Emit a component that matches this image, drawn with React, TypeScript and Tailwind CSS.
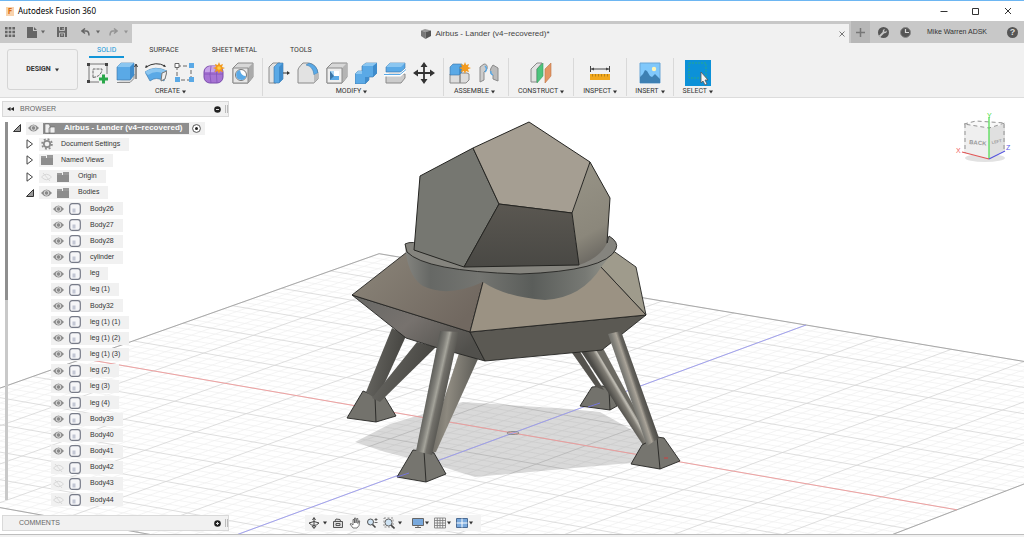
import React, { useState } from 'react';

type IconProps = { children: React.ReactNode; size?: string; box?: string };

const Svg: React.FC<IconProps> = ({ children, size = 'w-[22px] h-[22px]', box = '0 0 22 22' }) => (
  <svg viewBox={box} fill="none" className={`${size} shrink-0`} aria-hidden="true">
    {children}
  </svg>
);

const Caret: React.FC<{ className?: string }> = ({ className = 'text-[#333]' }) => (
  <svg viewBox="0 0 4 4" className={`w-1 h-1 shrink-0 ${className}`} aria-hidden="true">
    <path d="M0 0.5h4L2 3.5z" fill="currentColor" />
  </svg>
);

const GRAY = '#8a8a8a';
const BLUE = '#5aa9e6';
const EDGE = '#3a74a5';

const icons: Record<string, React.ReactNode> = {
  sketch: (
    <Svg>
      <path d="M2 2h18M2 2v18M2 20h10M20 2v10" stroke="#777" />
      <path d="M0 1h3v3H0zM18 1h3v3h-3zM0 18h3v3H0z" fill="#444" />
      <path d="M6 15.500V7H15C15 11 12 15 6 15.500z" stroke="#666" strokeDasharray="3 1" />
      <path d="M16.500 12.500v9M12 17h9" stroke="#2ba84a" strokeWidth="3" />
    </Svg>
  ),
  extrude: (
    <Svg>
      <path d="M1 20.500h13l4-4V12" stroke={GRAY} fill="#ddd" />
      <path d="M1 5l4-4h13v12l-4 5H1z" fill={BLUE} stroke={EDGE} strokeWidth=".6" />
      <path d="M1 5l4-4h13l-4 4z" fill="#8bc6f0" />
      <path d="M14 5l4-4v12l-4 5z" fill="#3f8ccc" />
      <path d="M20 17V3M18.500 5L20 2l1.500 3" stroke="#333" />
    </Svg>
  ),
  revolve: (
    <Svg>
      <path d="M1 5Q11-1 20 4" stroke="#333" />
      <path d="M0 6l1-3 2 2zM21 5l-3-.5 1.500-2z" fill="#333" />
      <path d="M0 10Q10 3 22 9l-3 10Q11 14 5 19z" fill={BLUE} stroke={EDGE} strokeWidth=".6" />
      <path d="M0 10Q10 3 22 9l-5 2Q10 8 3 13z" fill="#8bc6f0" />
      <path d="M17 11l5-2-2 8-4 2z" fill="#eee" stroke="#777" />
    </Svg>
  ),
  pattern: (
    <Svg>
      <path d="M3 4v14h14M3 4h14v14" stroke="#666" strokeDasharray="4 2" />
      <path d="M1 1.500h4v4H1z" fill="#fff" stroke="#666" />
      <path d="M15 1h5v5h-5zM1 15h5v5H1zM15 15h5v5h-5z" fill={BLUE} />
    </Svg>
  ),
  form: (
    <Svg>
      <rect x="1" y="4" width="19" height="17" rx="6" fill="#a774d4" stroke="#7a4cab" />
      <path d="M2 8Q4 4 9 4h5l-3 6H2z" fill="#c7a3e8" />
      <path d="M1 12h19M8 4q-2 9 0 17M14 5q-1 8 0 16" stroke="#8353b8" strokeWidth=".8" />
      <path d="M16 0l1.200 3L20 2l-1 3 3 1-3 1.200 1 3-3-1.200-1 3-1.200-3-3 1.200 1.200-3-3-1.200 3-1-1.200-3 3 1z" fill="#f29a1f" />
      <circle cx="16" cy="6" r="1.800" fill="#ffcf4a" />
    </Svg>
  ),
  hole: (
    <Svg>
      <path d="M1 6l5-5h15v14l-5 6H1z" fill="#d8d8d8" stroke={GRAY} />
      <path d="M16 6l5-5v14l-5 6z" fill="#aaa" />
      <path d="M1 6h15v15H1z" fill="#e6e6e6" stroke={GRAY} />
      <circle cx="9" cy="13" r="5.500" fill="#fff" stroke="#777" />
      <path d="M8 8a5 5 0 1 0 6 6q-5 0-6-6z" fill={BLUE} />
    </Svg>
  ),
  pressPull: (
    <Svg>
      <path d="M1 5l4-4h7v16l-4 4H1z" fill="#e2e2e2" stroke={GRAY} />
      <path d="M6 5l4-4h5v16l-4 4H6z" fill={BLUE} stroke={EDGE} strokeWidth=".6" />
      <path d="M11 5l4-4v16l-4 4z" fill="#3f8ccc" />
      <path d="M15 11h5" stroke="#333" />
      <path d="M22 11l-3-2v4z" fill="#333" />
    </Svg>
  ),
  fillet: (
    <Svg>
      <path d="M1 21V8q0-2 5-7h5q9 1 10 11v5l-4 4z" fill="#e2e2e2" stroke={GRAY} />
      <path d="M9 3q7 1 8 10l4-2Q20 3 12 1z" fill={BLUE} stroke={EDGE} strokeWidth=".5" />
      <path d="M17 13l4-2v6l-4 4z" fill="#bbb" />
    </Svg>
  ),
  shell: (
    <Svg>
      <path d="M1 6l5-5h15v14l-5 6H1z" fill="#d8d8d8" stroke={GRAY} />
      <path d="M16 6l5-5v14l-5 6z" fill="#b4b4b4" />
      <path d="M1 6h15v15H1z" fill="#eee" stroke={GRAY} />
      <path d="M4 9h9v9H4z" fill="#a8d5f5" />
      <path d="M4 9l4 5v4H4z" fill={EDGE} />
      <path d="M4 18l4-4h5v4z" fill={BLUE} />
      <path d="M8 9h5v5H8z" fill="#fff" />
    </Svg>
  ),
  combine: (
    <Svg>
      <path d="M0 12l3-3h4V4l4-3h11v10l-4 4h-4v3l-4 4H0z" fill={BLUE} stroke={EDGE} strokeWidth=".6" />
      <path d="M7 4l4-3h11l-4 3zM0 12l3-3h4v3z" fill="#8bc6f0" />
      <path d="M18 4l4-3v10l-4 4zM10 15h4v3l-4 4z" fill="#3f8ccc" />
    </Svg>
  ),
  split: (
    <Svg>
      <path d="M2 14l3-2h16v4l-4 5H2z" fill="#ccc" stroke={GRAY} />
      <path d="M2 5l4-4h15v5l-4 4H2z" fill={BLUE} stroke={EDGE} strokeWidth=".6" />
      <path d="M2 5l4-4h15l-4 4z" fill="#8bc6f0" />
      <path d="M0 13h16l6-5" stroke="#fff" strokeWidth="3" />
      <path d="M0 12.500h16l6-5" stroke={BLUE} />
    </Svg>
  ),
  move: (
    <Svg>
      <path d="M11 3v16M3 11h16" stroke="#333" strokeWidth="1.800" />
      <path d="M11 0l3.500 5h-7zM11 22l3.500-5h-7zM0 11l5-3.500v7zM22 11l-5-3.500v7z" fill="#333" />
    </Svg>
  ),
  component: (
    <Svg>
      <path d="M11 11h7l2 1v6l-3 3h-6zM1 12h10v9H1z" fill="#ddd" stroke={GRAY} />
      <path d="M1 5l3-3h9v8l-3 3H1z" fill={BLUE} stroke={EDGE} strokeWidth=".6" />
      <path d="M10 5l3-3v8l-3 3z" fill="#3f8ccc" />
      <path d="M16 0l1.200 3L20 2l-1 3 3 1-3 1.200 1 3-3-1.200-1 3-1.200-3-3 1.200 1.200-3-3-1.200 3-1-1.200-3 3 1z" fill="#f29a1f" />
    </Svg>
  ),
  joint: (
    <Svg>
      <path d="M2 5l4-3q4 0 3 5l-3 3v8l-4 2z" fill="#ccc" stroke={GRAY} />
      <path d="M20 19l-5-2v-4q-4-2-2-7l2-3 5 3z" fill="#bbb" stroke={GRAY} />
      <path d="M7 4q3 3 0 6M13 9q-1 3 2 4" stroke={BLUE} strokeWidth="1.500" />
    </Svg>
  ),
  plane: (
    <Svg>
      <path d="M1 7l6-6h5L7 7v13H1z" fill="#e2e2e2" stroke={GRAY} />
      <path d="M7 7l6-6v13l-6 7z" fill="#4dc47d" stroke="#3a9c60" strokeWidth=".6" />
      <path d="M15 7l6-6v13l-6 7z" fill="#e49563" stroke="#bd7547" strokeWidth=".6" />
    </Svg>
  ),
  measure: (
    <Svg>
      <path d="M1.500 4v6M20.500 4v6M2 7h18" stroke="#444" />
      <path d="M2 7l3-1.500v3zM20 7l-3-1.500v3z" fill="#444" />
      <path d="M1 12h20v6H1z" fill="#f2a81d" />
      <path d="M3.500 12v2.500M6.500 12v2.500M9.500 12v2.500M12.500 12v2.500M15.500 12v2.500M18.500 12v2.500" stroke="#a87814" strokeWidth=".8" />
    </Svg>
  ),
  image: (
    <Svg>
      <path d="M1 1h20v20H1z" fill="#80c8fb" stroke="#6aa6d6" />
      <circle cx="15" cy="7" r="2.200" fill="#fff5b5" />
      <path d="M1 15l3-3 2-4 2 1 3 5 2 1 3-3 5 5v4H1z" fill="#3d80b3" />
    </Svg>
  ),
  select: (
    <Svg size="w-[26px] h-[26px]" box="0 0 26 26">
      <path d="M0 0h26v26H0z" fill="#0c91d8" />
      <path d="M4 3h17v15H4z" stroke="#27a88c" strokeDasharray="2 1" />
      <path d="M16 12l7 8h-3l2 4-2 1-2-4-2 2z" fill="#f4f4f4" stroke="#555" strokeWidth=".8" />
    </Svg>
  ),
};

const groups = [
  { label: 'CREATE', tools: ['sketch', 'extrude', 'revolve', 'pattern', 'form', 'hole'], pad: 'pl-0 pr-2' },
  { label: 'MODIFY', tools: ['pressPull', 'fillet', 'shell', 'combine', 'split', 'move'], pad: 'pl-[5px] pr-2' },
  { label: 'ASSEMBLE', tools: ['component', 'joint'], pad: 'pl-[5px] pr-2' },
  { label: 'CONSTRUCT', tools: ['plane'], pad: 'px-[9px]' },
  { label: 'INSPECT', tools: ['measure'], pad: 'px-[9px]' },
  { label: 'INSERT', tools: ['image'], pad: 'px-2' },
  { label: 'SELECT', tools: ['select'], pad: 'px-[9px]' },
];

const bodies = [
  'Body26', 'Body27', 'Body28', 'cylinder', 'leg', 'leg (1)', 'Body32', 'leg (1) (1)', 'leg (1) (2)',
  'leg (1) (3)', 'leg (2)', 'leg (3)', 'leg (4)', 'Body39', 'Body40', 'Body41', 'Body42', 'Body43', 'Body44',
];
const hiddenBodies = ['Body42', 'Body43', 'Body44'];

const Eye: React.FC<{ off?: boolean }> = ({ off }) => (
  <Svg size="w-[11px] h-[8px]" box="0 0 11 8">
    {off ? (
      <path d="M.5 4Q5.500-1.500 10.500 4 5.500 9.500.5 4zM2 0l7 8" stroke="#d8d8d8" />
    ) : (
      <>
        <path d="M0 4Q5.500-3 11 4 5.500 11 0 4z" fill="#8b8b8b" />
        <circle cx="5.500" cy="4" r="2.300" stroke="#e8e8e8" strokeWidth=".9" />
      </>
    )}
  </Svg>
);

const Folder = () => (
  <Svg size="w-[12px] h-[10px]" box="0 0 12 10">
    <path d="M0 1h5v2H0zM6 0h6v3H6z" fill="#999" />
    <path d="M0 3h12v7H0z" fill="#8d8d8d" />
  </Svg>
);

const Body = () => (
  <Svg size="w-[12px] h-[12px]" box="0 0 12 12">
    <rect x=".7" y=".7" width="10.600" height="10.600" rx="2.500" fill="#f6f6f8" stroke="#777b88" strokeWidth="1.200" />
    <path d="M3.500 5.500h3v4h-3z" fill="#c3c7d4" />
  </Svg>
);

const Expander: React.FC<{ open?: boolean }> = ({ open }) => (
  <Svg size="w-[8px] h-[10px]" box="0 0 8 10">
    {open ? (
      <path d="M7.500 1.500v7h-7z" fill="#999" stroke="#333" />
    ) : (
      <path d="M1 .8L6.500 5 1 9.200z" fill="#fff" stroke="#444" />
    )}
  </Svg>
);

const treeChip = 'flex h-[13px] items-center bg-[#f1f1f1] pr-[9px]';

const Browser: React.FC = () => {
  const [hidden, setHidden] = useState<string[]>(hiddenBodies);

  const toggle = (name: string) => {
    setHidden(hidden.includes(name) ? hidden.filter((n) => n !== name) : [...hidden, name]);
  };

  return (
    <aside className="flex w-[229px] shrink-0 flex-col pl-[2px] pt-[3px] pb-[3px]">
      <div className="flex h-4 items-center border border-[#d9d9d9] bg-[#f1f1f1] pl-1 text-[7px] text-[#666]">
        <button aria-label="Collapse browser" className="mr-[6px]">
          <Svg size="w-[7px] h-[4px]" box="0 0 7 4">
            <path d="M3.500 0v4L0 2zM7 0v4L3.500 2z" fill="#222" />
          </Svg>
        </button>
        <h2>BROWSER</h2>
        <button aria-label="Browser options" className="ml-auto mr-1">
          <Svg size="w-[7px] h-[7px]" box="0 0 7 7">
            <circle cx="3.500" cy="3.500" r="3.300" fill="#222" />
            <path d="M2 3.500h3" stroke="#ddd" />
          </Svg>
        </button>
        <span className="h-2 w-[3px] border-x border-[#bbb]" />
      </div>

      <div className="flex min-h-0 flex-1 pb-[7px] pt-[3px] pl-[3px]">
        <div className="my-[2px] mb-[8px] w-[3px] shrink-0 bg-[#c9c9c9]">
          <div className="h-[47%] bg-[#8f8f8f]" />
        </div>
        <ul className="grid flex-1 auto-rows-fr items-center text-[7px] text-[#333]">
          <li className="flex items-center pl-[5px]">
            <button aria-label="Collapse Airbus - Lander"><Expander open /></button>
            <div className="ml-[5px] flex h-[13px] items-center bg-[#f1f1f1] pl-[2px] pr-1">
              <Eye />
              <div className="ml-[4px] flex h-[11px] items-center bg-[#8e8e8e] pr-[7px] font-bold text-white">
                <Svg size="w-[12px] h-[11px]" box="0 0 12 11">
                  <path d="M2 1h4l1 2v7H2zM6 5l2-1h4v6H6z" fill="#eee" stroke="#666" strokeWidth=".6" />
                </Svg>
                <span className="ml-[9px] whitespace-nowrap text-[8px]">Airbus - Lander (v4~recovered)</span>
              </div>
              <button aria-label="Activate component" className="ml-[3px]">
                <Svg size="w-[9px] h-[9px]" box="0 0 9 9">
                  <circle cx="4.500" cy="4.500" r="3.900" fill="#fff" stroke="#444" strokeWidth=".9" />
                  <circle cx="4.500" cy="4.500" r="1.500" fill="#222" />
                </Svg>
              </button>
            </div>
          </li>
          <li className="flex items-center pl-[18px]">
            <button aria-label="Expand Document Settings"><Expander /></button>
            <div className={`ml-[5px] ${treeChip}`}>
              <Svg size="w-[12px] h-[12px] mx-[2px]" box="0 0 12 12">
                <circle cx="6" cy="6" r="3.200" stroke="#8b8b8b" strokeWidth="1.800" />
                <circle cx="6" cy="6" r="4.900" stroke="#8b8b8b" strokeWidth="1.800" strokeDasharray="1.900 1.950" />
              </Svg>
              <span className="ml-[6px]">Document Settings</span>
            </div>
          </li>
          <li className="flex items-center pl-[18px]">
            <button aria-label="Expand Named Views"><Expander /></button>
            <div className={`ml-[5px] pl-[2px] ${treeChip}`}>
              <Folder />
              <span className="ml-2">Named Views</span>
            </div>
          </li>
          <li className="flex items-center pl-[18px]">
            <button aria-label="Expand Origin"><Expander /></button>
            <div className={`ml-[5px] pl-[2px] ${treeChip}`}>
              <Eye off />
              <span className="ml-[5px]"><Folder /></span>
              <span className="ml-[9px]">Origin</span>
            </div>
          </li>
          <li className="flex items-center pl-[18px]">
            <button aria-label="Collapse Bodies"><Expander open /></button>
            <div className={`ml-[5px] pl-[2px] ${treeChip}`}>
              <Eye />
              <span className="ml-[5px]"><Folder /></span>
              <span className="ml-[9px]">Bodies</span>
            </div>
          </li>
          {bodies.map((name) => (
            <li key={name} className="flex items-center pl-[43px]">
              <div className={`pl-[2px] ${treeChip}`}>
                <button aria-label={`Toggle ${name}`} onClick={() => toggle(name)}>
                  <Eye off={hidden.includes(name)} />
                </button>
                <span className="ml-[5px]"><Body /></span>
                <span className="ml-[9px]">{name}</span>
              </div>
            </li>
          ))}
        </ul>
      </div>

      <div className="flex h-4 items-center border border-[#d9d9d9] bg-[#f1f1f1] pl-4 text-[7px] text-[#666]">
        <h2>COMMENTS</h2>
        <button aria-label="Add comment" className="ml-auto mr-1">
          <Svg size="w-[7px] h-[7px]" box="0 0 7 7">
            <circle cx="3.500" cy="3.500" r="3.300" fill="#222" />
            <path d="M2 3.500h3M3.500 2v3" stroke="#ddd" />
          </Svg>
        </button>
        <span className="h-2 w-[3px] border-x border-[#bbb]" />
      </div>
    </aside>
  );
};

// ground plane point (u, v in -1..1) to screen
const project = (u: number, v: number) => {
  const w = 1 - 0.016 * u - 0.0184 * v;
  return `${((428.7 * u - 307.8 * v + 513) / w).toFixed(1)} ${((68.6 * u + 102 * v + 433) / w).toFixed(1)}`;
};

const STEPS = 30;
const gridPath = (major: boolean) => {
  let d = '';
  for (let i = -STEPS; i <= STEPS; i++) {
    if ((i % 5 === 0) !== major) continue;
    const t = i / STEPS;
    d += `M${project(-1, t)}L${project(1, t)}M${project(t, -1)}L${project(t, 1)}`;
  }
  return d;
};

const legs = [
  { points: '570,350 579,350 604,390 596,387', fill: '#55534e' },
  { points: '595,350 603,348 640,418 637,421', fill: '#6c6a63' },
  { points: '392,328 406,336 377,400 366,392', fill: 'url(#legDark)' },
  { points: '417,342 436,347 380,402 372,398', fill: 'url(#legDark)' },
  { points: '460,350 478,359 436,452 426,455', fill: 'url(#legMid)' },
  { points: '580,350 595,348 652,443 643,445', fill: 'url(#legInner)' },
];

const Scene = () => (
  <svg
    viewBox="0 98 1024 436"
    preserveAspectRatio="xMidYMid slice"
    className="absolute inset-0 h-full w-full"
    role="img"
    aria-label="Lander model"
  >
    <defs>
      {/* gradients run across each tube, in canvas units */}
      <linearGradient id="legFront" gradientUnits="userSpaceOnUse" x1="428" y1="388" x2="446" y2="392">
        <stop offset="0" stopColor="#5d5d59" />
        <stop offset=".3" stopColor="#7f7e78" />
        <stop offset=".5" stopColor="#a5a49b" />
        <stop offset=".65" stopColor="#73716b" />
        <stop offset="1" stopColor="#5a5954" />
      </linearGradient>
      <linearGradient id="legRight" gradientUnits="userSpaceOnUse" x1="624" y1="394" x2="642" y2="388">
        <stop offset="0" stopColor="#5d5d59" />
        <stop offset=".35" stopColor="#7f7e78" />
        <stop offset=".6" stopColor="#aaa499" />
        <stop offset=".75" stopColor="#67655f" />
        <stop offset="1" stopColor="#4c4b47" />
      </linearGradient>
      <linearGradient id="legInner" gradientUnits="userSpaceOnUse" x1="612" y1="398" x2="624" y2="391">
        <stop offset="0" stopColor="#4c4b47" />
        <stop offset=".5" stopColor="#807d75" />
        <stop offset=".7" stopColor="#c0bdb4" />
        <stop offset="1" stopColor="#5b5a55" />
      </linearGradient>
      <linearGradient id="legMid" x1="0" y1="0" x2="1" y2=".2">
        <stop offset="0" stopColor="#4e4d49" />
        <stop offset=".5" stopColor="#8d897f" />
        <stop offset="1" stopColor="#5b5a55" />
      </linearGradient>
      <linearGradient id="legDark" x1="0" x2="1" y2=".3">
        <stop offset="0" stopColor="#6d6c67" />
        <stop offset="1" stopColor="#44433f" />
      </linearGradient>
      <linearGradient id="ring" x1="0" x2="1">
        <stop offset="0" stopColor="#84847f" />
        <stop offset=".12" stopColor="#666865" />
        <stop offset=".35" stopColor="#747571" />
        <stop offset=".6" stopColor="#5a5d5a" />
        <stop offset=".85" stopColor="#777974" />
        <stop offset="1" stopColor="#9b9b91" />
      </linearGradient>
      <linearGradient id="leftPlate" x1="0" x2="1" y2=".6">
        <stop offset="0" stopColor="#8c867a" />
        <stop offset="1" stopColor="#716860" />
      </linearGradient>
      <linearGradient id="under" x1="0" x2="1" y2=".6">
        <stop offset="0" stopColor="#686865" />
        <stop offset=".5" stopColor="#77726e" />
        <stop offset="1" stopColor="#51504c" />
      </linearGradient>
      <linearGradient id="bottomFace" x1="0" x2="0" y2="1" y1="0">
        <stop offset="0" stopColor="#5a5751" />
        <stop offset="1" stopColor="#494844" />
      </linearGradient>
      <linearGradient id="rightFace" x1="0" x2=".2" y1="0" y2="1">
        <stop offset="0" stopColor="#989487" />
        <stop offset=".75" stopColor="#8b877b" />
        <stop offset="1" stopColor="#6f6c65" />
      </linearGradient>
    </defs>

    <path d={gridPath(false)} stroke="#efefef" strokeWidth=".7" fill="none" />
    <path d={gridPath(true)} stroke="#d6d6d6" strokeWidth=".8" fill="none" />
    <path
      d={`M${project(-1, -1)}L${project(1, -1)}L${project(1, 1)}L${project(-1, 1)}Z`}
      stroke="#9a9a9a"
      fill="none"
      strokeWidth=".8"
    />
    <path d="M355 442L390 424 463 402 570 409 600 412 650 440 664 460 630 463 475 477 440 466 385 452z" fill="#000" opacity=".15" />
    <path d={`M${project(-1, 0)}L${project(1, 0)}`} stroke="#f09a9a" strokeWidth=".9" />
    <path d={`M${project(0, -1)}L${project(0, 1)}`} stroke="#9a9af0" strokeWidth=".9" />
    <ellipse cx="513" cy="433" rx="6" ry="1.500" stroke="#777" strokeWidth=".8" fill="none" />

    <g stroke="#252522" strokeWidth=".9" strokeLinejoin="round">
      <path d="M592 387l11-1 6 3 8 17-7 4-30-4z" fill="#73726c" />
      <path d="M609 390l1 20" />
      <path d="M363 391l15 6 6-1 12 20-20 6-29-4z" fill="#73726c" />
      <path d="M375 397l1 25" />
    </g>
    {legs.map((leg) => (
      <polygon key={leg.points} points={leg.points} fill={leg.fill} />
    ))}
    <g stroke="#252522" strokeWidth=".9" strokeLinejoin="round">
      <path d="M413 450l11 1 10 2 12 21-20 8-29-5z" fill="#76756f" />
      <path d="M424 451l2 31" />
      <path d="M642 445l15-8 7 1 16 23-20 8-29-5z" fill="#76756f" />
      <path d="M657 437l3 32" />
    </g>
    <path d="M664 458h4" stroke="#d23f3f" />
    <path d="M397 477l12-4" stroke="#7575d8" />
    <path d="M600 403l-12 4" stroke="#7575d8" />

    {/* hull */}
    <g stroke="#252522" strokeWidth=".9" strokeLinejoin="round">
      <path d="M352 295l118 37 15 29-47-13-32-10z" fill="url(#under)" />
      <path d="M470 332l176-17-44 35-117 11z" fill="#5b5953" />
      <path d="M352 295l55-43 76 20v10l-13 50z" fill="url(#leftPlate)" />
      <path d="M600 266l12-16 24 17 10 48z" fill="#9f9b8c" />
      <path d="M483 266h117l46 49-176 17 13-50z" fill="#9b9283" />
    </g>
    <polygon points="440,331 459,332 432,455 416,451" fill="url(#legFront)" />
    <polygon points="608,334 621,331 659,438 647,446" fill="url(#legRight)" />
    <path d="M405 244Q407 276 423 286 448 298 483 282 505 297 545 300 582 298 602 266L617 247Q600 275 510 272 420 268 405 244z" fill="url(#ring)" />

    {/* collar */}
    <path d="M405 244Q412 240 425 246L607 243 609 236Q619 242 616 249 606 271 520 274 425 271 407 252z" fill="#85847e" stroke="#252522" strokeWidth=".9" />

    {/* dodecahedron */}
    <path d="M590 162L610 198 607 243Q600 258 579 265L572 213z" fill="url(#rightFace)" />
    <g stroke="#252522" strokeWidth="1" strokeLinejoin="round">
      <path d="M420 176L473 148 499 204 464 267 414 250z" fill="#767771" />
      <path d="M473 148L529 122 590 162 572 213 499 204z" fill="#a59e92" />
      <path d="M499 204L572 213 579 265 464 267z" fill="url(#bottomFace)" />
      <path d="M590 162L610 198 607 243" fill="none" />
    </g>
  </svg>
);

const ViewCube = () => (
  <button aria-label="View cube" className="mr-3 mt-3 ml-auto h-[54px] w-[58px]">
    <svg viewBox="954 110 58 54" className="h-full w-full font-['Liberation_Sans']">
      <ellipse cx="985" cy="158" rx="20" ry="4" fill="#e2e2e2" />
      <path d="M964 124l25 4v31l-25-6z" fill="#efefef" />
      <path d="M989 128l16-4v26l-16 9z" fill="#e0e0e0" />
      <path d="M964 124l12-3 29 2-16 5z" fill="#f8f8f8" />
      <path d="M964 124l12-3 29 2-16 5zM965 124v29M1004 124v25" fill="none" stroke="#888" strokeDasharray="4 3" strokeWidth=".9" />
      <path d="M989 159V117" stroke="#48dd48" strokeWidth="1.200" />
      <path d="M989 159l-27-7" stroke="#e05555" strokeWidth="1.200" />
      <path d="M989 159l16-8" stroke="#5353dd" strokeWidth="1.200" />
      <text x="969" y="144" fontSize="6" fontWeight="bold" fill="#999" transform="rotate(5 969 144)">BACK</text>
      <text x="992" y="144" fontSize="4" fontWeight="bold" fill="#999" transform="rotate(-12 992 144)">LEFT</text>
      <text x="987" y="118" fontSize="7" fill="#4ade4a">Y</text>
      <text x="956" y="153" fontSize="7" fill="#ef6060">X</text>
      <text x="1006" y="150" fontSize="7" fill="#5a5ae8">Z</text>
    </svg>
  </button>
);

const navTools = [
  {
    label: 'Orbit',
    menu: true,
    space: 'gap-[3px]',
    icon: <path d="M6 1v10M1 6q5 5 10 0M1 6q5-3 10 0M4.500 3L6 .5 7.500 3M4 9l2 2.500L8 9" stroke="#444" />,
  },
  {
    label: 'Look At',
    icon: <path d="M1.500 4.500h9v6h-9zM3 4l1-2 4 .5.5 1.500M4 6.500h4v2H4z" stroke="#555" fill="#ddd" />,
  },
  {
    label: 'Pan',
    icon: <path d="M4 11L1 7l1-.5L4 8V2.500h1L5.500 6V1h1.200l.3 5 .8-4.500h1V6.500l1-3 .9.500-.7 4.500L8 11z" stroke="#555" strokeWidth=".8" fill="#fff" />,
  },
  {
    label: 'Zoom',
    icon: (
      <>
        <circle cx="4.500" cy="5" r="3" stroke="#555" fill="#cfe3f3" />
        <path d="M6.500 7.500l3 3" stroke="#444" strokeWidth="1.600" />
        <path d="M8.500 2.500h3M10 1v3M8.500 5.500h3" stroke="#444" strokeWidth=".8" />
      </>
    ),
  },
  {
    label: 'Fit',
    menu: true,
    space: 'gap-[3px] pr-[5px]',
    icon: (
      <>
        <path d="M1 1h9v9H1z" stroke="#777" strokeDasharray="2 1.500" strokeWidth=".8" />
        <circle cx="5.500" cy="5.500" r="3.500" stroke="#666" fill="#cfe3f3" />
        <path d="M8 8l3.500 3.500" stroke="#444" strokeWidth="1.600" />
      </>
    ),
  },
  {
    label: 'Display Settings',
    menu: true,
    icon: (
      <>
        <path d="M.5 1.500h11v7H.5z" fill="#79a9dd" stroke="#666" />
        <path d="M3 10.500h6M6 9v2" stroke="#666" />
      </>
    ),
  },
  {
    label: 'Grid and Snaps',
    menu: true,
    icon: <path d="M.5 1h11v10H.5zM.5 3.500h11M.5 6h11M.5 8.500h11M3.300 1v10M6 1v10M8.700 1v10" stroke="#777" strokeWidth=".8" />,
  },
  {
    label: 'Viewports',
    menu: true,
    icon: (
      <>
        <path d="M.5 1.500h11v9H.5z" fill="#79a9dd" stroke="#4c6c94" />
        <path d="M6 1.500v9M.5 6h11" stroke="#fff" />
      </>
    ),
  },
];

const Viewport: React.FC = () => (
  <main className="relative flex min-h-0 flex-1 overflow-hidden bg-white">
    <Scene />
    <div className="relative flex flex-1">
      <Browser />
      <nav className="mb-[3px] ml-[76px] flex h-4 items-center gap-[5px] self-end bg-[#f3f3f3] pl-[3px] pr-2">
        {navTools.map((tool) => (
          <button
            key={tool.label}
            aria-label={tool.label}
            className={`flex items-center ${tool.space || 'gap-[1px]'}`}
          >
            <Svg size="w-[12px] h-[12px]" box="0 0 12 12">{tool.icon}</Svg>
            {tool.menu && <Caret />}
          </button>
        ))}
      </nav>
      <ViewCube />
    </div>
  </main>
);

const TitleBar = () => (
  <header className="flex h-[21px] shrink-0 items-center border-t border-[#6db6f2] bg-white pl-[6px] font-['Noto_Sans',sans-serif] text-[8px] text-black">
    <span className="flex h-[9px] w-2 items-center justify-center bg-[#f9d3ac] text-[8px] font-bold leading-none text-[#d96b12]">F</span>
    <h1 className="ml-1">Autodesk Fusion 360</h1>
    <div className="ml-auto flex gap-6 pr-3">
      <button aria-label="Minimize">
        <Svg size="w-2 h-2" box="0 0 8 8"><path d="M.5 4.500h7" stroke="#333" /></Svg>
      </button>
      <button aria-label="Maximize">
        <Svg size="w-2 h-2" box="0 0 8 8"><path d="M.5 1.500h6v6h-6z" stroke="#333" /></Svg>
      </button>
      <button aria-label="Close">
        <Svg size="w-2 h-2" box="0 0 8 8"><path d="M1 1l6 6M7 1L1 7" stroke="#333" /></Svg>
      </button>
    </div>
  </header>
);

const TabBar = () => (
  <div className="flex h-[22px] shrink-0 bg-[#c8c8c8] text-[#555]">
    <div className="flex w-[132px] shrink-0 items-center pl-[5px]">
      <button aria-label="Data panel">
        <Svg size="w-[10px] h-[10px]" box="0 0 10 10">
          <path d="M0 0h2.600v2.600H0zM3.700 0h2.600v2.600H3.700zM7.400 0H10v2.600H7.400zM0 3.700h2.600v2.600H0zM3.700 3.700h2.600v2.600H3.700zM7.400 3.700H10v2.600H7.400zM0 7.400h2.600V10H0zM3.700 7.400h2.600V10H3.700zM7.400 7.400H10V10H7.400z" fill="#666" />
        </Svg>
      </button>
      <button aria-label="File" className="ml-3 flex items-center gap-1">
        <Svg size="w-[10px] h-[11px]" box="0 0 10 11"><path d="M0 0h6v4h4v7H0zM7 0l3 3H7z" fill="#666" /></Svg>
        <Caret className="text-[#666]" />
      </button>
      <button aria-label="Save" className="ml-3">
        <Svg size="w-[10px] h-[10px]" box="0 0 10 10">
          <path d="M0 0h10v10H0z" fill="#666" />
          <path d="M2.500 0v3.500h5V0M2.500 10V6h5v4M6 1v1.500M4 8h2" stroke="#c8c8c8" strokeWidth=".9" />
        </Svg>
      </button>
      <button aria-label="Undo" className="ml-[14px] flex items-center gap-[6px]">
        <Svg size="w-[9px] h-[8px]" box="0 0 9 8"><path d="M4 .5L1 3l3 2.500M1 3h4q3 0 3 4.500" stroke="#666" strokeWidth="1.500" /></Svg>
        <Caret className="text-[#666]" />
      </button>
      <button aria-label="Redo" className="ml-[9px] flex items-center gap-[6px]">
        <Svg size="w-[9px] h-[8px]" box="0 0 9 8"><path d="M5 .5L8 3 5 5.500M8 3H4Q1 3 1 7.500" stroke="#949494" strokeWidth="1.500" /></Svg>
        <Caret className="text-[#949494]" />
      </button>
    </div>
    <div className="mt-[3px] flex flex-1 items-center bg-[#f1f1f1] pr-1">
      <div className="flex flex-1 items-center justify-center gap-1 text-[8px] text-[#444]">
        <Svg size="w-[10px] h-[10px]" box="0 0 10 10">
          <path d="M0 1.500L4 0l6 1.500L4.500 3z" fill="#999" />
          <path d="M0 1.500L4.500 3v7L0 7z" fill="#777" />
          <path d="M4.500 3L10 1.500V7l-5.500 3z" fill="#555" />
        </Svg>
        <span>Airbus - Lander (v4~recovered)*</span>
      </div>
      <button aria-label="Close tab">
        <Svg size="w-[6px] h-[6px]" box="0 0 6 6"><path d="M.5.5l5 5M5.500.5l-5 5" stroke="#777" /></Svg>
      </button>
    </div>
    <div className="flex w-[175px] shrink-0 items-center pl-[2px]">
      <button aria-label="New tab" className="flex h-full w-[19px] items-center justify-center bg-[#b7b7b7]">
        <Svg size="w-[9px] h-[9px]" box="0 0 9 9"><path d="M4.500 0v9M0 4.500h9" stroke="#777" strokeWidth="1.500" /></Svg>
      </button>
      <button aria-label="Extensions" className="ml-2">
        <Svg size="w-[11px] h-[11px]" box="0 0 11 11">
          <circle cx="5.500" cy="5.500" r="5.500" fill="#555" />
          <path d="M1.500 9.500l4-4" stroke="#c8c8c8" strokeWidth="1.800" />
          <path d="M8.500 3.500a2 2 0 1 1-1.500-1.200L6 4l1 1z" fill="#c8c8c8" />
        </Svg>
      </button>
      <button aria-label="Job status" className="ml-[11px]">
        <Svg size="w-[11px] h-[11px]" box="0 0 11 11">
          <circle cx="5.500" cy="5.500" r="5" fill="#555" stroke="#888" />
          <path d="M5.500 2v3.500H9" stroke="#d8d8d8" strokeWidth="1.200" />
        </Svg>
      </button>
      <button className="ml-4 whitespace-nowrap text-[7px] text-[#333]">Mike Warren ADSK</button>
      <button aria-label="Help" className="ml-auto mr-[6px] flex h-[11px] w-[11px] items-center justify-center rounded-full bg-[#555] text-[9px] font-bold leading-none text-[#ddd]">
        ?
      </button>
    </div>
  </div>
);

const Ribbon: React.FC = () => {
  const [tab, setTab] = useState('SOLID');

  return (
    <div className="flex h-[55px] shrink-0 border-b border-[#dcdcdc] bg-[#f1f1f1] pl-[7px] font-[Roboto,sans-serif] text-[7px] text-[#333]">
      <button className="mb-[7px] mt-[6px] flex w-[71px] shrink-0 items-center justify-center gap-1 rounded-[3px] border border-[#d5d5d5] font-bold">
        DESIGN <Caret />
      </button>
      <div className="ml-[9px] flex flex-col">
        <div className="flex h-[15px] shrink-0 gap-[17px] pl-[2px]">
          {['SOLID', 'SURFACE', 'SHEET METAL', 'TOOLS'].map((name) => (
            <button
              key={name}
              onClick={() => setTab(name)}
              className={
                tab === name
                  ? 'border-b-2 border-[#1295d8] px-2 pt-[2px] text-[#1295d8]'
                  : 'border-b-2 border-transparent px-2 pt-[2px]'
              }
            >
              {name}
            </button>
          ))}
        </div>
        <div className="flex flex-1 divide-x divide-[#d9d9d9] pb-[3px]">
          {groups.map((group) => (
            <div key={group.label} className={`flex flex-col items-center ${group.pad}`}>
              <div className="flex h-[29px] items-center gap-[7px]">
                {group.tools.map((tool) => (
                  <button key={tool} aria-label={tool}>{icons[tool]}</button>
                ))}
              </div>
              <button className="flex h-[9px] items-center gap-[2px] whitespace-nowrap leading-none">
                {group.label} <Caret />
              </button>
            </div>
          ))}
        </div>
      </div>
    </div>
  );
};

const App: React.FC = () => (
  <div className="flex h-screen flex-col overflow-hidden font-['Liberation_Sans',Arial,sans-serif]">
    <TitleBar />
    <TabBar />
    <Ribbon />
    <Viewport />
    <footer className="h-[3px] shrink-0 border-t border-[#bdbdbd] bg-[#f1f1f1]" />
  </div>
);

export default App;
